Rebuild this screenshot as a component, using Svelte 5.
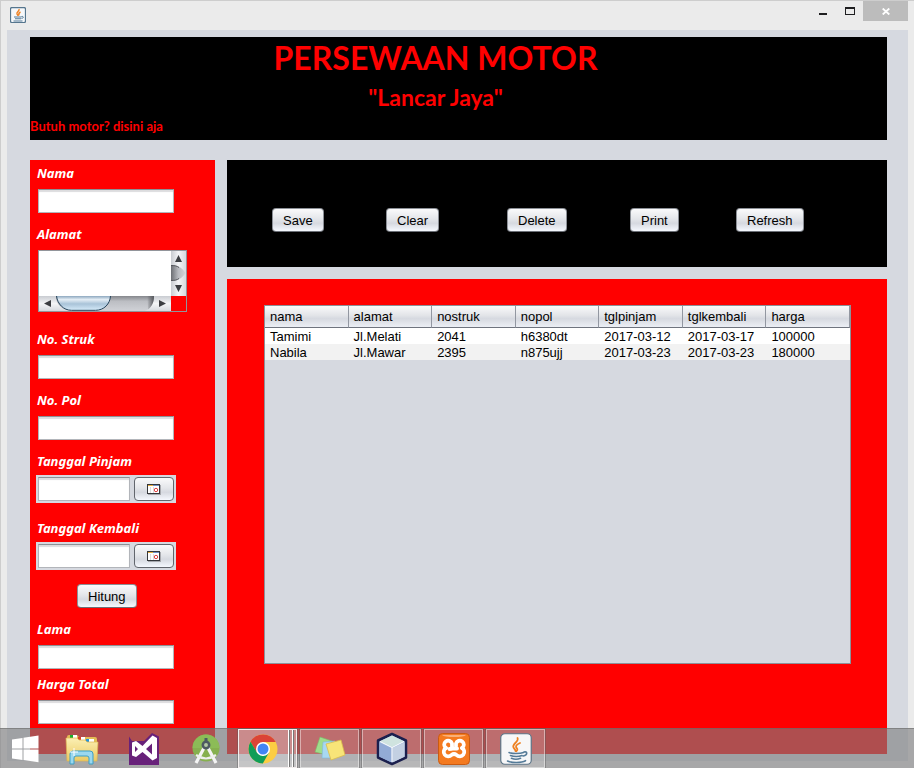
<script>
  const columns = ['nama', 'alamat', 'nostruk', 'nopol', 'tglpinjam', 'tglkembali', 'harga'];
  const rows = [
    ['Tamimi', 'Jl.Melati', '2041', 'h6380dt', '2017-03-12', '2017-03-17', '100000'],
    ['Nabila', 'Jl.Mawar', '2395', 'n875ujj', '2017-03-23', '2017-03-23', '180000']
  ];
  const actions = ['Save', 'Clear', 'Delete', 'Print', 'Refresh'];
  let form = $state({ nama: '', alamat: '', struk: '', pol: '', pinjam: '', kembali: '', lama: '', harga: '' });
</script>

{#snippet javaCup()}
  <path d="M17.500 5c2 3.500-6 6-4 9.500 1 1.800 2 2 2 3.500M20 10c-5 2-4.500 4-3 5.500.8 1 .2 2-.7 2.700" fill="none" stroke="#ee8122" stroke-width="1.800" stroke-linecap="round" />
  <path d="M9 19.500c3 1.300 11 1.300 14.500 0M10.500 22.500c3 1.200 8.500 1.200 11.500 0M11.500 25.300c2.500 1 6.500 1 9 0M7.500 28c4 2 14 2 18-.3M24 19c3.500-1 4 3-.8 4" fill="none" stroke="#557b98" stroke-width="1.600" stroke-linecap="round" />
{/snippet}

{#snippet calendarIcon()}
  <svg width="14" height="11" viewBox="0 0 14 11" aria-hidden="true">
    <rect x="1" y="1" width="13" height="10" fill="#a7a9ae" />
    <rect x=".5" y=".5" width="12" height="9" fill="#fff" stroke="#34363a" />
    <path d="M1 1.500h5" stroke="#e8b040" />
    <path d="M6 1.500h6" stroke="#6f8fc4" />
    <path d="M3.500 3v6M6.500 3v6" stroke="#dcdcdc" />
    <circle cx="9" cy="6" r="1.700" fill="#fff" stroke="#e04040" />
  </svg>
{/snippet}

<div class="window">
  <header class="titlebar">
    <svg class="app-icon" width="16" height="16" viewBox="0 0 32 32" aria-hidden="true">
      <rect x="1" y="1" width="30" height="30" rx="3" fill="#f6f8fa" stroke="#56768e" stroke-width="2.500" />
      <path d="M18 4c2 4-6 6-4 10 1 2 2 2 2 4M21 10c-4 2-4 4-3 7" fill="none" stroke="#ee8122" stroke-width="2.800" />
      <path d="M8 20h15M10 23.500h12M7 28h18M23 19c5-1 5 3 0 4" fill="none" stroke="#557b98" stroke-width="2" />
    </svg>
    <div class="controls">
      <button aria-label="Minimize"><svg width="10" height="10" viewBox="0 0 10 10"><rect x="1" y="7" width="8" height="2" fill="#1e1e20" /></svg></button>
      <button aria-label="Maximize"><svg width="10" height="8" viewBox="0 0 10 8"><path d="M0 0h10v8H0zM1 2v5h8V2z" fill="#1e1e20" fill-rule="evenodd" /></svg></button>
      <button class="close" aria-label="Close"><svg width="8" height="7" viewBox="0 0 8 7"><path d="M.7.500 7.300 6.500M7.300.500.7 6.500" stroke="#fff" stroke-width="1.800" /></svg></button>
    </div>
  </header>

  <main>
    <section class="banner">
      <h1>PERSEWAAN MOTOR</h1>
      <h2>"Lancar Jaya"</h2>
      <p>Butuh motor? disini aja</p>
    </section>

    <div class="columns">
      <form class="sidebar" onsubmit={(e) => e.preventDefault()}>
        <div class="field">
          <label for="nama">Nama</label>
          <input id="nama" type="text" bind:value={form.nama} />
        </div>
        <div class="field section-end">
          <label for="alamat">Alamat</label>
          <div class="scrollpane">
            <textarea id="alamat" bind:value={form.alamat}></textarea>
            <svg width="15" height="45" viewBox="0 0 15 45" aria-hidden="true">
              <defs>
                <linearGradient id="vbtn"><stop offset="0" stop-color="#c9ccd1" /><stop offset=".5" stop-color="#f4f5f7" /><stop offset="1" stop-color="#d6d9de" /></linearGradient>
                <linearGradient id="vtrack"><stop offset="0" stop-color="#6c6e73" /><stop offset=".5" stop-color="#b8babf" /><stop offset="1" stop-color="#d2d4d9" /></linearGradient>
              </defs>
              <rect width="15" height="45" fill="url(#vbtn)" />
              <path d="M0 14c5 0 11 2 14.500 8-3.500 6-9.500 8-14.500 8z" fill="url(#vtrack)" />
              <path d="M0 14.500c4 0 6 .5 8 2M0 29.500c4 0 6-.5 8-2" fill="none" stroke="#55575c" />
              <path d="M4 11h7L7.500 4zM4 34h7l-3.500 7z" fill="#3b3d41" />
            </svg>
            <svg width="132" height="15" viewBox="0 0 132 15" aria-hidden="true">
              <defs>
                <linearGradient id="hbtn" x2="0" y2="1"><stop offset="0" stop-color="#c9ccd1" /><stop offset=".5" stop-color="#f4f5f7" /><stop offset="1" stop-color="#d6d9de" /></linearGradient>
                <linearGradient id="htrack" x2="0" y2="1"><stop offset="0" stop-color="#85878c" /><stop offset=".35" stop-color="#bcbec3" /><stop offset="1" stop-color="#d0d2d7" /></linearGradient>
                <linearGradient id="hend"><stop offset="0" stop-color="#55575c" stop-opacity="0" /><stop offset="1" stop-color="#55575c" /></linearGradient>
                <linearGradient id="thumb" x2="0" y2="1"><stop offset="0" stop-color="#8da8bf" /><stop offset=".25" stop-color="#e4edf5" /><stop offset=".55" stop-color="#a9c3d8" /><stop offset="1" stop-color="#d6ebfa" /></linearGradient>
              </defs>
              <rect width="132" height="15" fill="url(#hbtn)" />
              <path d="M17 0h98c0 7-3 13-9 15H30C22 13 17 8 17 0z" fill="url(#htrack)" />
              <path d="M108 0h7c0 6-2 10-6 13.500z" fill="url(#hend)" />
              <path d="M17.500 0c1 8 7 14.300 15 14.300h24C65 14.300 71 8 71.500 0z" fill="url(#thumb)" />
              <path d="M17.500 0c1 8 7 14.300 15 14.300h24C65 14.300 71 8 71.500 0" fill="none" stroke="#27455c" />
              <path d="M12 4v7L5 7.500zM120 4v7l7-3.500z" fill="#3b3d41" />
            </svg>
          </div>
        </div>
        <div class="field">
          <label for="struk">No. Struk</label>
          <input id="struk" type="text" bind:value={form.struk} />
        </div>
        <div class="field">
          <label for="pol">No. Pol</label>
          <input id="pol" type="text" bind:value={form.pol} />
        </div>
        <div class="field date">
          <label for="pinjam">Tanggal Pinjam</label>
          <div class="picker">
            <input id="pinjam" type="text" bind:value={form.pinjam} />
            <button type="button" class="btn" aria-label="Pilih tanggal pinjam">{@render calendarIcon()}</button>
          </div>
        </div>
        <div class="field date">
          <label for="kembali">Tanggal Kembali</label>
          <div class="picker">
            <input id="kembali" type="text" bind:value={form.kembali} />
            <button type="button" class="btn" aria-label="Pilih tanggal kembali">{@render calendarIcon()}</button>
          </div>
        </div>
        <button type="submit" class="btn hitung">Hitung</button>
        <div class="field tight">
          <label for="lama">Lama</label>
          <input id="lama" type="text" bind:value={form.lama} />
        </div>
        <div class="field tight">
          <label for="harga">Harga Total</label>
          <input id="harga" type="text" bind:value={form.harga} />
        </div>
      </form>

      <div class="content">
        <div class="actions">
          {#each actions as action}
            <button type="button" class="btn">{action}</button>
          {/each}
        </div>
        <section class="results">
          <div class="viewport">
            <table>
              <thead>
                <tr>{#each columns as column}<th>{column}</th>{/each}</tr>
              </thead>
              <tbody>
                {#each rows as row}
                  <tr>{#each row as cell}<td>{cell}</td>{/each}</tr>
                {/each}
              </tbody>
            </table>
          </div>
        </section>
      </div>
    </div>
  </main>
</div>

<nav class="taskbar" aria-label="Taskbar">
  <button class="start" aria-label="Start">
    <svg width="28" height="28" viewBox="0 0 28 28"><path d="M1 4.500 11.500 3v10.500H1zM12.500 2.800 27.500.500v13h-15zM1 14.500h10.500V25L1 23.500zM12.500 14.500h15v12.700l-15-2.100z" fill="#fff" /></svg>
  </button>
  <button aria-label="File Explorer">
    <svg width="34" height="32" viewBox="0 0 34 32">
      <defs><linearGradient id="folder" x2="0" y2="1"><stop offset="0" stop-color="#fbf0b4" /><stop offset="1" stop-color="#ecca62" /></linearGradient></defs>
      <path d="M2 4q0-2 2-2h8l2 2h16q2 0 2 2v21H2z" fill="#e3bd55" />
      <path d="M5 2h7v3H5z" fill="#fff" /><path d="M5 2h3v3H5z" fill="#18b02c" />
      <path d="M13 4h7v3h-7z" fill="#fff" /><path d="M13 4h3v3h-3z" fill="#d8452a" />
      <path d="M21 6h8v3h-8z" fill="#fff" /><path d="M21 6h3v3h-3z" fill="#2496dc" />
      <path d="M1 5h11l2 2h6l2 2h11l-1 19H2z" fill="url(#folder)" stroke="#dcb552" stroke-width=".7" />
      <path d="M5 31V21q0-3 3-3h17q3 0 3 3v10h-4v-6q0-2-2-2H11q-2 0-2 2v6z" fill="#9bd8ee" stroke="#3c9fc5" />
      <path d="M9 15v8M5 19h8" stroke="#fff" stroke-width="1" />
    </svg>
  </button>
  <button aria-label="Visual Studio">
    <svg width="30" height="32" viewBox="0 0 30 32"><path d="M0 3.500 3 8h12l8-8 7 3.500V32H0z" fill="#68217a" /><path d="M23.500 2.500 28 5v20l-4.500 2.500L13.500 19 7 24l-4-1.500v-13L7 8l6.500 5zM23 10.500 17 16l6 5.500zM6 13v6l3-3z" fill="#fff" fill-rule="evenodd" /></svg>
  </button>
  <button aria-label="Android Studio">
    <svg width="30" height="32" viewBox="0 0 30 32">
      <circle cx="15" cy="15" r="13.500" fill="#86b04f" /><path d="M1.500 15a13.500 13.500 0 0 1 27 0z" fill="#8cbc57" />
      <path d="M14 13 5 30M16 13l9 17" stroke="#f4f4f4" stroke-width="3.200" />
      <path d="M5 22q10 7 20 0" fill="none" stroke="#eee" stroke-width="2.200" />
      <path d="M15 5v4" stroke="#4d5a62" stroke-width="3" /><circle cx="15" cy="12" r="3.200" fill="#b4c8a4" stroke="#4d5a62" stroke-width="2.500" />
    </svg>
  </button>
  <button class="task active" aria-label="Google Chrome">
    <svg width="30" height="30" viewBox="0 0 30 30">
      <circle cx="15" cy="15" r="14.500" fill="#fccd43" />
      <path d="M15 8h12.700A14.500 14.500 0 0 0 2.500 7.700l6.400 11z" fill="#db4437" />
      <path d="M2.500 7.700A14.500 14.500 0 0 0 14.800 29.500L21 18.600 15 22l-6-3.500z" fill="#109d58" />
      <circle cx="15" cy="15" r="7" fill="#fff" /><circle cx="15" cy="15" r="5.500" fill="#4285f4" />
    </svg>
  </button>
  <button class="task" aria-label="Sticky Notes">
    <svg width="34" height="28" viewBox="0 0 34 28">
      <path d="m7 2 12 4-5 14L2 17z" fill="#9fdc8b" stroke="#78bb68" stroke-width=".6" />
      <path d="m10 7 12-1 1 17H9z" fill="#a8d8f2" stroke="#80b8da" stroke-width=".6" />
      <path d="m13 9 15-4 4 15-14 5z" fill="#f8e578" stroke="#d9bd4b" stroke-width=".8" />
    </svg>
  </button>
  <button class="task" aria-label="NetBeans">
    <svg width="32" height="34" viewBox="0 0 32 34">
      <path d="M16 2 30 8.500v17L16 32 2 25.500v-17z" fill="#a9bfe0" stroke="#1b1f4d" stroke-width="2.500" stroke-linejoin="round" />
      <path d="m16 3.500 12 5.700L16 15 4 9.200z" fill="#cfe3df" />
      <path d="M3.500 10.500 15.500 16v14.500l-12-5.700z" fill="#92abd6" /><path d="M28.500 10.500 16.500 16v14.500l12-5.700z" fill="#c3d0e2" />
      <path d="M4 9.500 16 15.500l12-6M16 15.500V30" fill="none" stroke="#fff" stroke-width="1" />
    </svg>
  </button>
  <button class="task" aria-label="XAMPP">
    <svg width="32" height="32" viewBox="0 0 32 32">
      <rect x=".5" y=".5" width="31" height="31" rx="4" fill="#f47a20" stroke="#c95b12" />
      <path d="M4 2h24q-2 2-12 2T4 2z" fill="#f9b078" />
      <g fill="none" stroke="#fff" stroke-width="3.800" stroke-linecap="round" stroke-linejoin="round">
        <path d="M8 15a4 4 0 1 1 6-4.500V14q0 2-2.500 2" />
        <path d="M24 15a4 4 0 1 0-6-4.500V13" />
        <path d="M8 15a4.500 4.500 0 1 0 5.500 7q2.500-2 5 0A4.500 4.500 0 1 0 24 15" />
        <path d="M14 15.500h5" />
      </g>
    </svg>
  </button>
  <button class="task" aria-label="Java">
    <svg width="32" height="32" viewBox="0 0 32 32">
      <rect x=".75" y=".75" width="30.500" height="30.500" rx="4" fill="#f7f7f8" stroke="#5c7486" stroke-width="1.200" />
      {@render javaCup()}
    </svg>
  </button>
</nav>

<style>
  :global(body) {
    margin: 0;
    font: 13px/16px 'Liberation Sans', Arial, sans-serif;
    color: #000;
  }
  * { box-sizing: border-box; }
  button, input, textarea { font: inherit; color: inherit; margin: 0; }
  button { padding: 0; border: 0; background: none; }
  svg { display: block; }

  .window {
    min-height: 100vh;
    display: flex;
    flex-direction: column;
    padding: 0 6px 7px;
    border-top: 1px solid #cdcdcd;
    border-left: 1px solid #cdcdcd;
    background: #ebebeb;
  }
  .titlebar {
    display: flex;
    justify-content: space-between;
    height: 29px;
  }
  .app-icon { margin: 6px 3px; }
  .controls { display: flex; height: 20px; }
  .controls button {
    display: flex;
    align-items: center;
    justify-content: center;
    width: 27px;
  }
  .controls .close { width: 45px; background: #bcbcbc; }

  main {
    flex: 1;
    display: flex;
    flex-direction: column;
    gap: 20px;
    padding: 7px 21px 7px 23px;
    background: #d6d9e0;
  }
  .banner {
    height: 103px;
    background: #000;
    color: #f00;
    text-align: center;
  }
  h1, h2, p { margin: 0; }
  h1, h2, p { font-family: Lato, 'Open Sans', sans-serif; font-weight: 700; }
  h1, h2 { padding-right: 46px; }
  h1 { font-size: 32px; line-height: 42px; }
  h2 { font-size: 23px; line-height: 36px; }
  p { font-size: 13px; line-height: 22px; text-align: left; }

  .columns { flex: 1; display: flex; gap: 12px; }
  .sidebar {
    flex: none;
    width: 185px;
    padding: 5px 7px 0;
    background: #f00;
  }
  .field { display: flex; flex-direction: column; gap: 8px; margin-bottom: 13px; }
  .section-end { margin-bottom: 19px; }
  .tight { margin-bottom: 7px; }
  .date { gap: 6px; margin-bottom: 14px; }
  .date + .date { margin-top: 17px; }
  label {
    font: italic bold 13px/16px 'Noto Sans', 'Open Sans', sans-serif;
    color: #fff;
  }
  input {
    width: 136px;
    height: 24px;
    margin-left: 1px;
    padding: 2px 6px;
    border: 1px solid #b2b5ba;
    border-top-color: #8d9095;
    background: #fff;
    box-shadow: inset 0 2px 1px #dcdcde;
    outline: none;
  }
  .scrollpane {
    display: grid;
    grid-template-columns: 132px 15px;
    grid-template-rows: 45px 15px;
    width: 149px;
    margin-left: 1px;
    border: 1px solid #92959b;
  }
  textarea {
    width: 100%;
    height: 100%;
    padding: 2px 6px;
    border: 0;
    resize: none;
    overflow: hidden;
    outline: none;
    background: #fff;
  }
  .picker {
    display: flex;
    gap: 4px;
    width: 140px;
    padding: 2px;
    margin-left: -1px;
    background: #d6d9e0;
  }
  .picker input { flex: 1; min-width: 0; margin: 0; }
  .picker .btn { width: 40px; padding: 0; border-color: #62666d; }

  .btn {
    display: flex;
    align-items: center;
    justify-content: center;
    height: 24px;
    padding: 2px 10px 0;
    border: 1px solid #8c9097;
    border-bottom-color: #6b6f76;
    border-radius: 4px;
    background: linear-gradient(#fafafb, #e4e6ea 45%, #d6d9e0 65%, #f5f8fe);
  }
  .hitung { margin: 0 0 13px 40px; }

  .content { flex: 1; min-width: 0; display: flex; flex-direction: column; gap: 12px; }
  .actions {
    display: grid;
    grid-template-columns: 114fr 121fr 123fr 106fr 68fr;
    justify-items: start;
    height: 107px;
    padding: 48px 83px 0 45px;
    background: #000;
  }
  .results {
    flex: 1;
    display: flex;
    padding: 26px 36px 90px 37px;
    background: #f00;
  }
  .viewport { flex: 1; border: 1px solid #8d9199; background: #d6d9e0; }
  table { width: 100%; table-layout: fixed; border-collapse: separate; border-spacing: 0; }
  th, td { padding: 0 5px; text-align: left; font-weight: 400; white-space: nowrap; }
  th {
    height: 22px;
    padding-top: 1px;
    border-right: 1px solid #9297a1;
    border-bottom: 1px solid #6f747e;
    background: linear-gradient(#fafafb, #e2e4e8 45%, #d6d9e0 60%, #eceff5);
  }
  td { height: 16px; padding-top: 2px; line-height: 14px; background: #fff; }
  tbody tr:nth-child(even) td { background: #f2f2f2; }

  .taskbar {
    position: fixed;
    left: 0;
    right: 0;
    bottom: 0;
    display: flex;
    gap: 3px;
    height: 40px;
    border-top: 1px solid rgba(100, 100, 100, 0.5);
    background: rgba(126, 126, 128, 0.62);
  }
  .taskbar button {
    display: flex;
    align-items: center;
    justify-content: center;
    width: 59px;
    height: 39px;
  }
  .taskbar .start { width: 49px; }
  .taskbar .task {
    border: 1px solid rgba(255, 255, 255, 0.45);
    background: rgba(255, 255, 255, 0.18);
    outline: 1px solid rgba(90, 90, 90, 0.4);
  }
  .taskbar .active {
    padding-right: 9px;
    border-color: #f3eeee;
    background: linear-gradient(90deg, transparent 49px, #fff 49px 50px, #777 50px 51px, transparent 51px 53px, #fff 53px 54px, #777 54px 55px, transparent 55px), rgba(255, 255, 255, 0.35);
  }
</style>
